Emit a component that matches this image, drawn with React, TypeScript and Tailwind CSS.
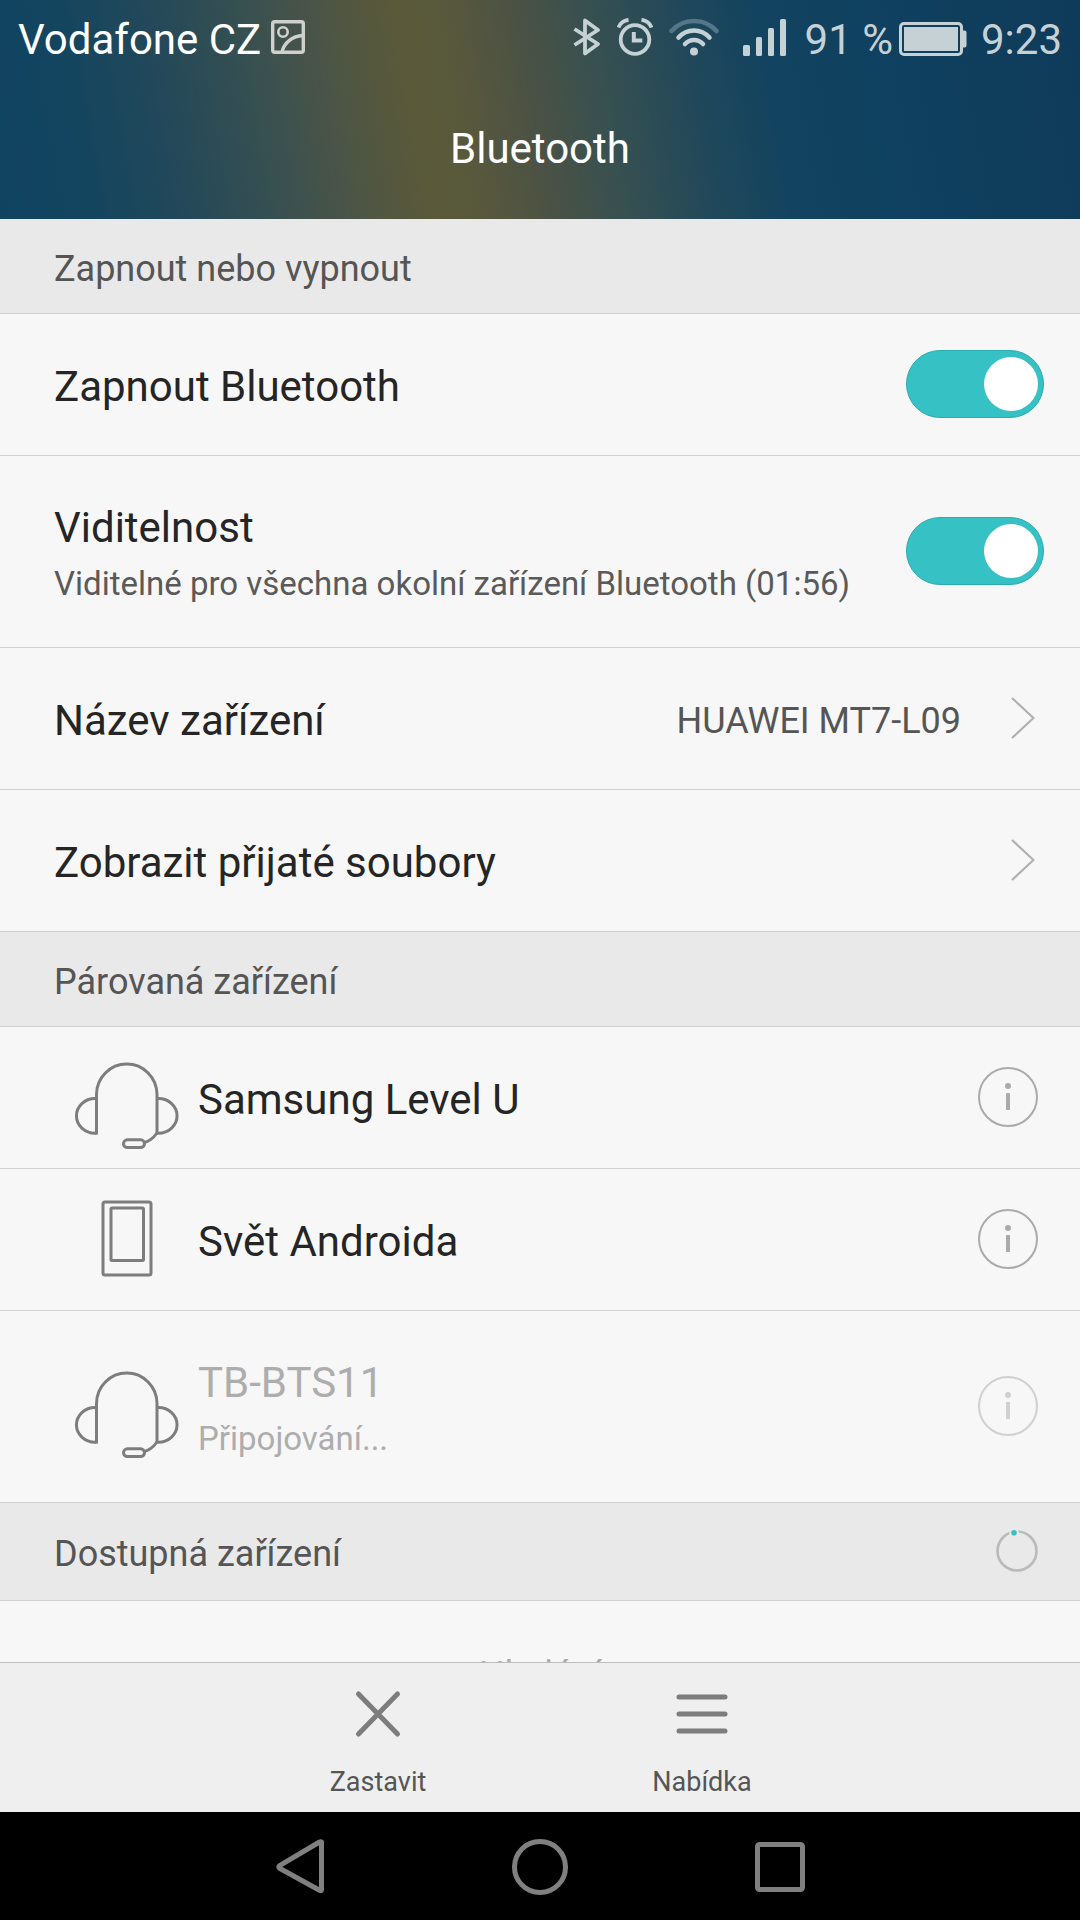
import { useState, type ReactNode } from "react";

function ImageIcon() {
  return (
    <svg width="34" height="34" viewBox="0 0 34 34" fill="none" stroke="#d0d0ce" strokeWidth="3.4">
      <rect x="1.7" y="1.7" width="30.6" height="30.6" rx="2" />
      <circle cx="12" cy="12" r="4.7" strokeWidth="2.6" />
      <path d="M11 32c2-9 10-16 21-16.500" />
    </svg>
  );
}

function StatusBluetoothIcon() {
  return (
    <svg width="28" height="38" viewBox="0 0 28 38" fill="none" stroke="#c6d1d6" strokeWidth="3.800" strokeLinejoin="round">
      <path d="M1.500 11 25 26 12 35.500V2.500L25 12 1.500 27" />
    </svg>
  );
}

function AlarmIcon() {
  return (
    <svg width="36" height="38" viewBox="0 0 36 38" fill="none" stroke="#c6d1d6">
      <circle cx="18" cy="21.500" r="14.300" strokeWidth="3.800" />
      <path d="M16.800 14v8.500h8.500" strokeWidth="4" />
      <path d="M1.500 9.500C3 5.500 7 2.500 11.500 1.800M34.500 9.500C33 5.500 29 2.500 24.500 1.800" strokeWidth="3.800" />
    </svg>
  );
}

function WifiIcon() {
  return (
    <svg width="50" height="38" viewBox="0 0 50 38" fill="none" stroke="#c6d1d6" strokeWidth="4.500" strokeLinecap="round">
      <path d="M2.500 13C14-.500 36-.500 47.500 13" stroke="#557689" />
      <path d="M9.500 19.500c8.500-9.500 22.500-9.500 31 0" />
      <path d="M16 26c5-5.300 13-5.300 18 0" />
      <circle cx="25" cy="33.500" r="4" fill="#c6d1d6" stroke="none" />
    </svg>
  );
}

function SignalIcon() {
  return (
    <svg width="44" height="38" viewBox="0 0 44 38" fill="#c6d1d6">
      <rect x="0" y="27" width="7" height="11" rx="1.500" />
      <rect x="13" y="19" width="6" height="19" rx="1.500" />
      <rect x="25" y="10" width="6" height="28" rx="1.500" />
      <rect x="37" y="1" width="6" height="37" rx="1.500" />
    </svg>
  );
}

function BatteryIcon() {
  return (
    <svg width="68" height="34" viewBox="0 0 68 34" fill="#c6d1d6">
      <rect x="1.500" y="1.500" width="61" height="31" rx="3.500" fill="none" stroke="#c6d1d6" strokeWidth="3" />
      <rect x="5" y="5" width="54" height="24" />
      <path d="M64 8.500h1.500a2 2 0 0 1 2 2v13a2 2 0 0 1-2 2H64z" />
    </svg>
  );
}

function Chevron() {
  return (
    <svg className="shrink-0" width="24" height="42" viewBox="0 0 24 42" fill="none" stroke="#b0b0b0" strokeWidth="2.200">
      <path d="M1 1l21.500 20L1 41" />
    </svg>
  );
}

function HeadsetIcon() {
  return (
    <svg className="shrink-0" width="144" height="120" viewBox="0 0 144 120" fill="none" stroke="#7d7d7d" strokeWidth="3">
      <path d="M42.500 97.500V57.500a30.250 30.500 0 0 1 60.500 0V96" />
      <path d="M42.500 61.500H41a18.500 17.300 0 0 0 0 34.700h1.500M103 61.500h1.500a18.500 17.300 0 0 1 0 34.700H103" />
      <path d="M103 96c-3.500 5-8 8.500-14 10" />
      <rect x="69.500" y="102.800" width="21" height="7.800" rx="3.900" />
    </svg>
  );
}

function PhoneIcon() {
  return (
    <svg className="shrink-0" width="144" height="120" viewBox="0 0 144 120" fill="none" stroke="#7d7d7d" strokeWidth="3">
      <rect x="49" y="23" width="48" height="73" rx="2" />
      <rect x="57" y="29" width="32.500" height="52.500" rx="1" />
    </svg>
  );
}

function InfoIcon() {
  return (
    <svg width="60" height="60" viewBox="0 0 60 60" fill="#aaaaaa">
      <circle cx="30" cy="30" r="29" fill="none" stroke="#aaaaaa" strokeWidth="2" />
      <circle cx="30" cy="19" r="3" />
      <rect x="28" y="26" width="4" height="17" rx="0.500" />
    </svg>
  );
}

function Spinner() {
  return (
    <svg width="42" height="42" viewBox="0 0 42 42" fill="none">
      <circle cx="21" cy="21" r="19.500" stroke="#bababa" strokeWidth="2.600" />
      <circle cx="18" cy="2.800" r="4.800" fill="#e9e9e9" />
      <circle cx="18" cy="2.800" r="2.800" fill="#36c1c4" />
    </svg>
  );
}

function SectionHeader({ title, children }: { title: string; children?: ReactNode }) {
  return (
    <div className="flex min-h-[95px] shrink-0 items-center justify-between border-b border-[#d0d0d0] bg-[#e9e9e9] pr-[42px] pb-px pl-[54px]">
      <h2 className="pt-1.5 text-[36px] leading-[48px] text-[#555555]">{title}</h2>
      {children}
    </div>
  );
}

function RowText({ title, note }: { title: string; note?: string }) {
  return (
    <span className="block grow pt-1.5 text-left">
      <span className="block text-[42px] leading-[60px]">{title}</span>
      {note && <span className="block text-[33px] leading-[52px] text-[#5a5a5a]">{note}</span>}
    </span>
  );
}

function ToggleRow({ title, note }: { title: string; note?: string }) {
  const [on, setOn] = useState(true);
  return (
    <label className={`flex items-center border-b border-[#d0d0d0] pr-9 pb-px pl-[54px] ${note ? "min-h-[192px]" : "min-h-[142px]"}`}>
      <RowText title={title} note={note} />
      <input
        type="checkbox"
        checked={on}
        onChange={(e) => setOn(e.target.checked)}
        className="flex h-[68px] w-[138px] shrink-0 appearance-none items-center rounded-full border border-[#2bacb0] bg-[#36c1c4] px-[5px] before:size-[54px] before:rounded-full before:bg-white checked:justify-end not-checked:border-gray-400 not-checked:bg-gray-300"
      />
    </label>
  );
}

function LinkRow({ title, value }: { title: string; value?: string }) {
  return (
    <button className="flex min-h-[142px] w-full items-center border-b border-[#d0d0d0] pr-[45px] pb-px pl-[54px]">
      <RowText title={title} />
      {value && <span className="mr-[50px] shrink-0 pt-1.5 text-[36px] leading-[48px] text-[#555555]">{value}</span>}
      <Chevron />
    </button>
  );
}

type Device = { name: string; kind: "headset" | "phone"; state?: string };

const paired: Device[] = [
  { name: "Samsung Level U", kind: "headset" },
  { name: "Svět Androida", kind: "phone" },
  { name: "TB-BTS11", kind: "headset", state: "Připojování..." },
];

function DeviceRow({ device }: { device: Device }) {
  const busy = Boolean(device.state);
  return (
    <li className={`flex items-center border-b border-[#d0d0d0] pr-[42px] pb-px pl-[54px] ${busy ? "min-h-[192px]" : "min-h-[142px]"}`}>
      {device.kind === "headset" ? <HeadsetIcon /> : <PhoneIcon />}
      <span className={`block grow pt-1.5 ${busy ? "text-[#adadad]" : ""}`}>
        <span className="block text-[42px] leading-[60px]">{device.name}</span>
        {device.state && <span className="block text-[33px] leading-[52px]">{device.state}</span>}
      </span>
      <button aria-label={`Informace: ${device.name}`} disabled={busy} className="disabled:opacity-50">
        <InfoIcon />
      </button>
    </li>
  );
}

function StatusBar() {
  return (
    <div className="flex h-[78px] items-center pr-[18px] pl-[18px] text-[42px] text-[#c6d1d6]">
      <span className="mr-2.5 text-white">Vodafone CZ</span>
      <span className="pb-1">
        <ImageIcon />
      </span>
      <div className="ml-auto flex items-center">
        <div className="flex items-center pb-1">
          <StatusBluetoothIcon />
          <span className="ml-4">
            <AlarmIcon />
          </span>
          <span className="ml-4">
            <WifiIcon />
          </span>
          <span className="ml-6">
            <SignalIcon />
          </span>
        </div>
        <span className="ml-[18px]">91 %</span>
        <span className="ml-1.5">
          <BatteryIcon />
        </span>
        <span className="ml-3.5">9:23</span>
      </div>
    </div>
  );
}

export default function App() {
  return (
    <div className="flex h-screen flex-col bg-[#f7f7f7] font-['Roboto',sans-serif] text-[#252525]">
      <header className="shrink-0 bg-[linear-gradient(80deg,#104361_0%,#13455f_8%,#22485a_16%,#375050_25%,#47534a_30%,#53573f_35%,#5a5a3a_39%,#58583c_43%,#4c5244_49%,#375050_56%,#21485a_64%,#12435f_71%,#0f4160_80%,#0f3b5a_100%)] text-white">
        <StatusBar />
        <h1 className="flex h-[141px] items-center justify-center text-[42px]">Bluetooth</h1>
      </header>

      <main className="flex-1 overflow-hidden">
        <SectionHeader title="Zapnout nebo vypnout" />
        <ToggleRow title="Zapnout Bluetooth" />
        <ToggleRow title="Viditelnost" note="Viditelné pro všechna okolní zařízení Bluetooth (01:56)" />
        <LinkRow title="Název zařízení" value="HUAWEI MT7-L09" />
        <LinkRow title="Zobrazit přijaté soubory" />

        <SectionHeader title="Párovaná zařízení" />
        <ul>
          {paired.map((d) => (
            <DeviceRow key={d.name} device={d} />
          ))}
        </ul>

        <div className="flex flex-col *:min-h-[98px]">
          <SectionHeader title="Dostupná zařízení">
            <Spinner />
          </SectionHeader>
        </div>
        <p className="pt-[50px] text-center text-[36px] leading-[48px] text-[#aaaaaa]">Hledání</p>
      </main>

      <footer className="flex h-[150px] shrink-0 justify-center border-t border-[#bdbdbd] bg-[#efefef] text-[27px] leading-9 text-[#555555]">
        <button className="flex w-[30%] flex-col items-center pt-[23px]">
          <svg width="56" height="56" viewBox="0 0 56 56" stroke="#7d7d7d" strokeWidth="5" strokeLinecap="round">
            <path d="M8.500 8l39 40M47.500 8l-39 40" />
          </svg>
          <span className="mt-[22px]">Zastavit</span>
        </button>
        <button className="flex w-[30%] flex-col items-center pt-[23px]">
          <svg width="56" height="56" viewBox="0 0 56 56" stroke="#7d7d7d" strokeWidth="5" strokeLinecap="round">
            <path d="M5 11h46M5 28h46M5 45h46" />
          </svg>
          <span className="mt-[22px]">Nabídka</span>
        </button>
      </footer>

      <nav className="flex h-[108px] shrink-0 items-center justify-center gap-[180px] bg-black">
        <button aria-label="Zpět">
          <svg width="60" height="60" viewBox="0 0 60 60" fill="none" stroke="#808080" strokeWidth="5" strokeLinejoin="round">
            <path d="M51.500 6v47.500Q51.500 55.500 49.500 54.300L10 32.500Q7.500 31 10 29.300L49.500 6Q51.500 5 51.500 7z" />
          </svg>
        </button>
        <button aria-label="Domů">
          <svg width="60" height="60" viewBox="0 0 60 60" fill="none" stroke="#808080" strokeWidth="5">
            <circle cx="30" cy="31" r="25.500" />
          </svg>
        </button>
        <button aria-label="Poslední aplikace">
          <svg width="60" height="60" viewBox="0 0 60 60" fill="none" stroke="#808080" strokeWidth="5">
            <rect x="7.500" y="8.500" width="45" height="45" rx="2" />
          </svg>
        </button>
      </nav>
    </div>
  );
}
